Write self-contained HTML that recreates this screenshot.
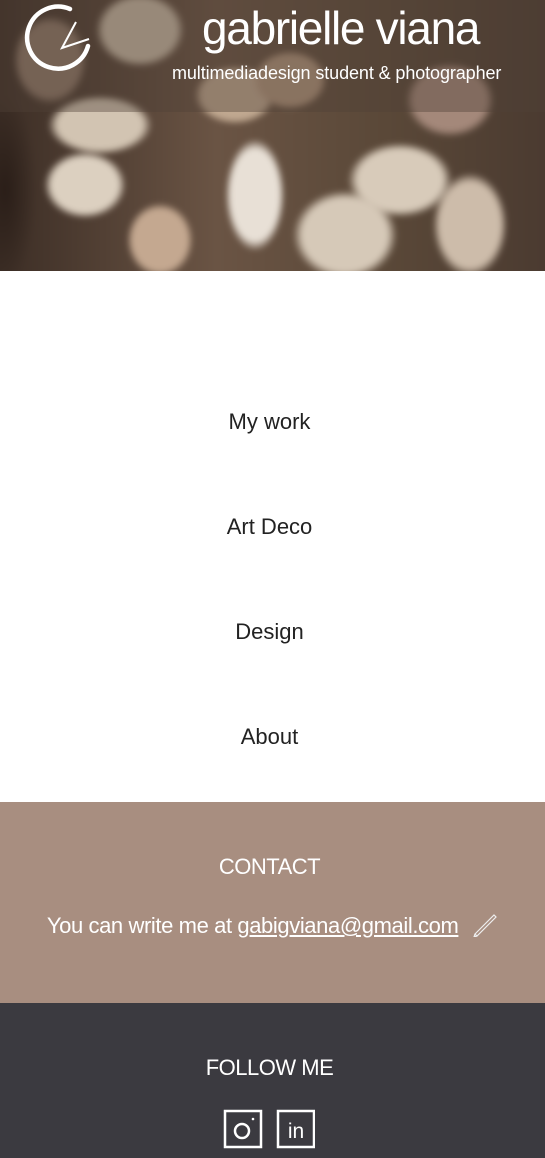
<!DOCTYPE html>
<html><head><meta charset="utf-8"><style>
*{margin:0;padding:0;box-sizing:border-box}
body{width:545px;height:1158px;overflow:hidden;font-family:"Liberation Sans",sans-serif;background:#fff;color:#222}
.hero{position:relative;height:271px;overflow:hidden;background:#4a3a30}
.bg{position:absolute;inset:-10px;filter:blur(3px);background:
radial-gradient(ellipse 55px 45px at 95px 195px,#dcd0c0 60%,transparent 75%),
radial-gradient(ellipse 40px 75px at 265px 205px,#e8e0d6 60%,transparent 75%),
radial-gradient(ellipse 70px 60px at 355px 245px,#d6c9b8 60%,transparent 75%),
radial-gradient(ellipse 70px 50px at 410px 190px,#d8cbba 60%,transparent 75%),
radial-gradient(ellipse 50px 70px at 480px 235px,#cdbcaa 60%,transparent 75%),
radial-gradient(ellipse 70px 40px at 110px 135px,#d2c4b2 60%,transparent 75%),
radial-gradient(ellipse 45px 50px at 170px 250px,#c4a890 60%,transparent 75%),
radial-gradient(ellipse 60px 50px at 150px 40px,#c9baa6 60%,transparent 75%),
radial-gradient(ellipse 50px 40px at 300px 90px,#b0947c 60%,transparent 75%),
radial-gradient(ellipse 60px 50px at 460px 110px,#a4887a 60%,transparent 75%),
radial-gradient(ellipse 50px 60px at 60px 70px,#8e7868 60%,transparent 75%),
radial-gradient(ellipse 55px 40px at 245px 105px,#c0a890 60%,transparent 75%),
radial-gradient(ellipse 40px 120px at 15px 200px,#2a1e18,transparent 80%),
linear-gradient(90deg,#3a2c24,#6a5444 40%,#5a4838 70%,#4a3a30)}
.band{position:absolute;left:0;top:0;width:100%;height:112px;background:rgba(80,65,55,.4)}
.logo{position:absolute;left:24px;top:4px}
h1{position:absolute;left:202px;top:1px;font-weight:normal;font-size:46px;color:#fff;letter-spacing:-1.3px}
.sub{position:absolute;left:172px;top:63px;font-size:18px;color:#fff;letter-spacing:-.1px}
nav a{display:block;text-align:center;font-size:22px;color:#222;text-decoration:none;position:absolute;width:100%;left:-3px}
.contact{position:absolute;top:802px;left:0;width:100%;height:201px;background:#a88e80;color:#fff;text-align:center}
.foot{position:absolute;top:1003px;left:0;width:100%;height:155px;background:#3b3a40;color:#fff;text-align:center}
</style></head><body>
<div class="hero"><div class="bg"></div><div class="band"></div>
<svg class="logo" width="72" height="72" viewBox="0 0 72 72"><path d="M46 5 A31 31 0 1 0 64 42" fill="none" stroke="#fff" stroke-width="4.5" stroke-linecap="round"/><path d="M52 18 L38 44 L65 35" fill="none" stroke="#fff" stroke-width="2" stroke-linejoin="miter"/></svg>
<h1>gabrielle viana</h1><div class="sub">multimediadesign student &amp; photographer</div></div>
<nav>
<a style="top:409px">My work</a>
<a style="top:514px">Art Deco</a>
<a style="top:619px">Design</a>
<a style="top:724px">About</a>
</nav>
<div class="contact"><div style="position:absolute;top:52px;width:100%;left:-3px;font-size:22px;letter-spacing:-.5px">CONTACT</div>
<div style="position:absolute;top:109px;width:100%;font-size:22px;letter-spacing:-.4px">You can write me at <u>gabigviana@gmail.com</u> <svg width="26" height="26" viewBox="0 0 26 26" style="vertical-align:-4px;margin-left:8px"><path d="M3 23 L22 4 L24 6 L5 25 Z M3 23 L2 26 L5 25" fill="none" stroke="#eee" stroke-width="1.2"/></svg></div></div>
<div class="foot"><div style="position:absolute;top:52px;width:100%;left:-3px;font-size:22px;letter-spacing:-.5px">FOLLOW ME</div>
<svg style="position:absolute;left:223px;top:106px" width="92" height="40" viewBox="0 0 92 40"><rect x="2" y="2" width="36" height="36" fill="none" stroke="#fff" stroke-width="2.5"/><circle cx="19" cy="22" r="7" fill="none" stroke="#fff" stroke-width="2.5"/><circle cx="30" cy="10" r="1.3" fill="#fff"/><rect x="55" y="2" width="36" height="36" fill="none" stroke="#fff" stroke-width="2.5"/><text x="73" y="29" text-anchor="middle" font-family="Liberation Sans" font-size="21" fill="#fff">in</text></svg></div>
</body></html>
